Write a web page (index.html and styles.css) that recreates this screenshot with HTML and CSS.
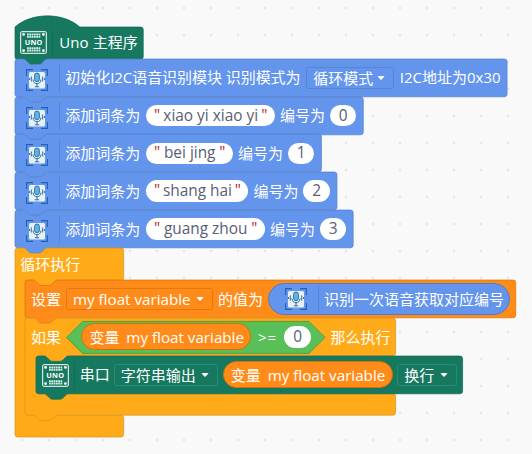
FILE: index.html
```
<!DOCTYPE html>
<html lang="zh-CN">
<head>
<meta charset="utf-8">
<title>Uno 主程序</title>
<link rel="stylesheet" href="styles.css">
</head>
<body>
<svg class="defs" width="0" height="0" aria-hidden="true">
  <symbol id="mic" viewBox="0 0 22 22">
    <rect x="3" y="3" width="16" height="16.5" rx="1.5" fill="#e9f0f5"/>
    <path d="M.6 7V.6H7M15 .6h6.4V7M21.4 15v6.4H15M7 21.4H.6V15" fill="none" stroke="#1c62b5" stroke-width="1.1"/>
    <rect x="8.6" y="4" width="4.8" height="8.8" rx="2.4" fill="#62b3e2" stroke="#1e6da8" stroke-width=".9"/>
    <path d="M7 10.5c0 5.6 8 5.6 8 0M11 14.8v3M8.8 17.8h4.4M5.3 7.5v5M3.6 9v2M16.7 7.5v5M18.4 9v2" fill="none" stroke="#276f9f" stroke-width="1"/>
  </symbol>
  <symbol id="board" viewBox="0 0 27 23">
    <rect x=".7" y=".7" width="25.6" height="21.6" rx="1" fill="none" stroke="#fff"/>
    <g fill="#fff"><circle cx="3.6" cy="3.4" r="1.4"/><circle cx="23.4" cy="3.4" r="1.4"/><circle cx="3.6" cy="19.6" r="1.4"/><circle cx="23.4" cy="19.6" r="1.4"/></g>
    <path d="M7 3.4h13.5M7 5.8h13.5M7 17.2h13.5M7 19.6h13.5" stroke="#d8eee6" stroke-width="1.9" stroke-dasharray="1.8 .5"/>
  </symbol>
</svg>

<main class="stack">
  <section class="block hat teal">
    <svg class="shape"><path d="M0 0c25-22 71-22 96 0H186a4 4 0 0 1 4 4V44a4 4 0 0 1-4 4H48c-2 0-3 1-4 2l-4 4c-1 1-2 2-4 2H24c-2 0-3-1-4-2l-4-4c-1-1-2-2-4-2H4a4 4 0 0 1-4-4Z"/></svg>
    <span class="uno"><svg><use href="#board"/></svg>UNO</span><i class="rule"></i>
    <span class="label title">Uno 主程序</span>
  </section>

  <section class="block row blue">
    <svg class="shape"><path d="M0 4a4 4 0 0 1 4-4H12c2 0 3 1 4 2l4 4c1 1 2 2 4 2H36c2 0 3-1 4-2l4-4c1-1 2-2 4-2H725a4 4 0 0 1 4 4V52a4 4 0 0 1-4 4H48c-2 0-3 1-4 2l-4 4c-1 1-2 2-4 2H24c-2 0-3-1-4-2l-4-4c-1-1-2-2-4-2H4a4 4 0 0 1-4-4Z"/></svg>
    <svg class="mic"><use href="#mic"/></svg><i class="rule"></i>
    <span class="label init">初始化I2C语音识别模块 识别模式为</span>
    <span class="drop mode">循环模式<b></b></span>
    <span class="label addr">I2C地址为0x30</span>
  </section>

  <section class="block row blue">
    <svg class="shape"><path d="M0 4a4 4 0 0 1 4-4H12c2 0 3 1 4 2l4 4c1 1 2 2 4 2H36c2 0 3-1 4-2l4-4c1-1 2-2 4-2H512a4 4 0 0 1 4 4V52a4 4 0 0 1-4 4H48c-2 0-3 1-4 2l-4 4c-1 1-2 2-4 2H24c-2 0-3-1-4-2l-4-4c-1-1-2-2-4-2H4a4 4 0 0 1-4-4Z"/></svg>
    <svg class="mic"><use href="#mic"/></svg><i class="rule"></i>
    <span class="label add">添加词条为</span>
    <span class="pill word w1"><q>"</q><span>xiao yi xiao yi</span><q>"</q></span>
    <span class="label num">编号为</span><span class="pill digit">0</span>
  </section>

  <section class="block row blue">
    <svg class="shape"><path d="M0 4a4 4 0 0 1 4-4H12c2 0 3 1 4 2l4 4c1 1 2 2 4 2H36c2 0 3-1 4-2l4-4c1-1 2-2 4-2H450a4 4 0 0 1 4 4V52a4 4 0 0 1-4 4H48c-2 0-3 1-4 2l-4 4c-1 1-2 2-4 2H24c-2 0-3-1-4-2l-4-4c-1-1-2-2-4-2H4a4 4 0 0 1-4-4Z"/></svg>
    <svg class="mic"><use href="#mic"/></svg><i class="rule"></i>
    <span class="label add">添加词条为</span>
    <span class="pill word w2"><q>"</q><span>bei jing</span><q>"</q></span>
    <span class="label num">编号为</span><span class="pill digit">1</span>
  </section>

  <section class="block row blue">
    <svg class="shape"><path d="M0 4a4 4 0 0 1 4-4H12c2 0 3 1 4 2l4 4c1 1 2 2 4 2H36c2 0 3-1 4-2l4-4c1-1 2-2 4-2H473a4 4 0 0 1 4 4V52a4 4 0 0 1-4 4H48c-2 0-3 1-4 2l-4 4c-1 1-2 2-4 2H24c-2 0-3-1-4-2l-4-4c-1-1-2-2-4-2H4a4 4 0 0 1-4-4Z"/></svg>
    <svg class="mic"><use href="#mic"/></svg><i class="rule"></i>
    <span class="label add">添加词条为</span>
    <span class="pill word w3"><q>"</q><span>shang hai</span><q>"</q></span>
    <span class="label num">编号为</span><span class="pill digit">2</span>
  </section>

  <section class="block row blue">
    <svg class="shape"><path d="M0 4a4 4 0 0 1 4-4H12c2 0 3 1 4 2l4 4c1 1 2 2 4 2H36c2 0 3-1 4-2l4-4c1-1 2-2 4-2H497a4 4 0 0 1 4 4V52a4 4 0 0 1-4 4H48c-2 0-3 1-4 2l-4 4c-1 1-2 2-4 2H24c-2 0-3-1-4-2l-4-4c-1-1-2-2-4-2H4a4 4 0 0 1-4-4Z"/></svg>
    <svg class="mic"><use href="#mic"/></svg><i class="rule"></i>
    <span class="label add">添加词条为</span>
    <span class="pill word w4"><q>"</q><span>guang zhou</span><q>"</q></span>
    <span class="label num">编号为</span><span class="pill digit">3</span>
  </section>

  <section class="block loop yellow">
    <svg class="shape"><path d="M0 4a4 4 0 0 1 4-4H12c2 0 3 1 4 2l4 4c1 1 2 2 4 2H36c2 0 3-1 4-2l4-4c1-1 2-2 4-2H157a4 4 0 0 1 4 4V44a4 4 0 0 1-4 4H64c-2 0-3 1-4 2l-4 4c-1 1-2 2-4 2H40c-2 0-3-1-4-2l-4-4c-1-1-2-2-4-2H20a4 4 0 0 0-4 4V244a4 4 0 0 0 4 4H157a4 4 0 0 1 4 4V276a4 4 0 0 1-4 4H4a4 4 0 0 1-4-4Z"/></svg>
    <header class="loop-head"><span class="label">循环执行</span></header>
    <div class="mouth">
      <section class="block row orange">
        <svg class="shape"><path d="M0 4a4 4 0 0 1 4-4H12c2 0 3 1 4 2l4 4c1 1 2 2 4 2H36c2 0 3-1 4-2l4-4c1-1 2-2 4-2H723a4 4 0 0 1 4 4V52a4 4 0 0 1-4 4H48c-2 0-3 1-4 2l-4 4c-1 1-2 2-4 2H24c-2 0-3-1-4-2l-4-4c-1-1-2-2-4-2H4a4 4 0 0 1-4-4Z"/></svg>
        <span class="label first">设置</span>
        <span class="drop var"><span class="latin">my float variable</span><b></b></span>
        <span class="label value">的值为</span>
        <span class="reporter listen"><svg class="mic"><use href="#mic"/></svg><i class="rule"></i><span class="label">识别一次语音获取对应编号</span></span>
      </section>
      <section class="block branch yellow">
        <svg class="shape"><path d="M0 4a4 4 0 0 1 4-4H12c2 0 3 1 4 2l4 4c1 1 2 2 4 2H36c2 0 3-1 4-2l4-4c1-1 2-2 4-2H545a4 4 0 0 1 4 4V52a4 4 0 0 1-4 4H64c-2 0-3 1-4 2l-4 4c-1 1-2 2-4 2H40c-2 0-3-1-4-2l-4-4c-1-1-2-2-4-2H20a4 4 0 0 0-4 4V108a4 4 0 0 0 4 4H545a4 4 0 0 1 4 4V140a4 4 0 0 1-4 4H48c-2 0-3 1-4 2l-4 4c-1 1-2 2-4 2H24c-2 0-3-1-4-2l-4-4c-1-1-2-2-4-2H4a4 4 0 0 1-4-4Z"/></svg>
        <header class="row">
          <span class="label first">如果</span>
          <span class="test">
            <svg class="hex"><path d="M16.5.4H243L259 16.4 243 32.4H16.5L.5 16.4Z"/></svg>
            <span class="reporter variable"><span class="cjk">变量</span><span class="latin">my float variable</span></span>
            <span class="op">&gt;=</span><span class="pill digit">0</span>
          </span>
          <span class="label then">那么执行</span>
        </header>
        <div class="mouth">
          <section class="block row teal">
            <svg class="shape"><path d="M0 4a4 4 0 0 1 4-4H12c2 0 3 1 4 2l4 4c1 1 2 2 4 2H36c2 0 3-1 4-2l4-4c1-1 2-2 4-2H628a4 4 0 0 1 4 4V52a4 4 0 0 1-4 4H48c-2 0-3 1-4 2l-4 4c-1 1-2 2-4 2H24c-2 0-3-1-4-2l-4-4c-1-1-2-2-4-2H4a4 4 0 0 1-4-4Z"/></svg>
            <span class="uno"><svg><use href="#board"/></svg>UNO</span><i class="rule"></i>
            <span class="label serial">串口</span>
            <span class="drop output">字符串输出<b></b></span>
            <span class="reporter variable"><span class="cjk">变量</span><span class="latin">my float variable</span></span>
            <span class="drop newline">换行<b></b></span>
          </section>
        </div>
      </section>
    </div>
  </section>
</main>
</body>
</html>
```

FILE: styles.css
```
* { box-sizing: border-box; }
body {
  margin: 0;
  height: 454px;
  overflow: hidden;
  background: #f9f9f9 radial-gradient(circle at 13.5px 13.5px, #dadada .8px, transparent 1.3px) 8.5px -5.5px / 27px 27px;
  font: 15px/20px "Open Sans", "Noto Sans CJK SC", sans-serif;
  color: #fff;
}
.defs { position: absolute; }
.stack { padding: 26.5px 0 0 14.7px; }

/* blocks */
.block { position: relative; }
.row, .hat { display: flex; align-items: center; height: 37.8px; white-space: nowrap; }
.hat { height: 32.4px; }
.row > *, .hat > *, .reporter > *, .test > * { flex: none; }
.shape {
  position: absolute;
  left: 0;
  top: 0;
  width: 1px;
  height: 1px;
  overflow: visible;
}
.shape path { transform: scale(.675); stroke-width: 1; }
.blue > .shape { fill: #6495ec; stroke: #4f7cca; }
.teal > .shape { fill: #16795f; stroke: #0c6650; }
.yellow > .shape { fill: #ffab19; stroke: #d29019; }
.orange > .shape { fill: #ff8c1a; stroke: #db6e00; }
.row > *:not(.shape), .hat > *:not(.shape), .loop-head { position: relative; }

.mic { width: 22px; height: 22px; margin-left: 11.3px; top: 2px; }
.uno {
  width: 27px;
  height: 23px;
  margin-left: 5.5px;
  top: .3px;
  font-size: 7.3px;
  font-weight: 700;
  line-height: 23px;
  letter-spacing: .2px;
  text-align: center;
}
.uno svg { position: absolute; left: 0; top: 0; width: 27px; height: 23px; }
.rule { width: 1px; height: 28px; margin-left: 11px; background: #5584d4; }
.teal .rule { margin-left: 5px; background: #126e57; }
.label { position: relative; top: -.3px; }
.title { width: 80px; margin-left: 6px; letter-spacing: .1px; }
.init { width: 236px; margin-left: 5.3px; letter-spacing: -.05px; }
.addr { margin-left: 5.5px; }
.add { width: 75px; margin-left: 5.3px; }
.num { width: 45px; margin-left: 5px; }
.first { width: 30px; margin-left: 5.5px; }
.value { width: 45px; margin-left: 5px; }
.then { margin-left: 5px; }
.serial { width: 30px; margin-left: 5px; }
.latin { font-size: 15.2px; }

/* inputs */
.drop {
  display: flex;
  align-items: center;
  justify-content: space-between;
  height: 22px;
  padding: 0 8px 0 6px;
  border: 1px solid #5584d4;
  border-radius: 2.5px;
}
.drop b { border: solid transparent; border-width: 4px 4px 0; border-top-color: #fff; border-radius: 2px; }
.orange .drop { border-color: #e87908; }
.teal .drop { border-color: #258d72; }
.mode { width: 88px; margin-left: 5px; }
.var { width: 147px; margin-left: 5px; }
.output { width: 104px; margin-left: 4px; }
.newline { width: 59.5px; margin-left: 4.5px; }
.pill {
  display: flex;
  align-items: center;
  justify-content: center;
  height: 21.6px;
  border-radius: 11px;
  background: #fff;
  color: #575e75;
}
.digit { width: 26.5px; margin-left: 5px; font-size: 15.4px; }
.word { margin-left: 5.7px; justify-content: space-between; padding: 0 7.5px 0 8px; font-size: 15.4px; }
.word q { quotes: none; color: #b3292c; }
.word q::before, .word q::after { content: none; }
.w1 { width: 129px; }
.w2 { width: 87px; }
.w3 { width: 102.5px; }
.w4 { width: 119px; }

/* nested reporters */
.reporter { display: flex; align-items: center; border: .7px solid #db6e00; background: #ff8c1a; border-radius: 17px; }
.listen { width: 242px; height: 32.4px; margin-left: 5.5px; border-color: #4f7cca; background: #6495ec; }
.listen .mic { position: relative; top: 0; margin-left: 15.5px; }
.listen .label { margin-left: 5px; }
.variable { width: 170px; height: 27px; padding: 0 6.5px 0 7px; justify-content: space-between; }
.teal .variable { margin-left: 5px; }
.test { display: flex; align-items: center; width: 259px; height: 32.4px; margin-left: 5.5px; padding-left: 15px; }
.hex { position: absolute; left: 0; top: 0; width: 259px; height: 33px; overflow: visible; fill: #59c059; stroke: #389438; stroke-width: .7; }
.test > *:not(.hex) { position: relative; }
.op { width: 22px; margin-left: 6.5px; letter-spacing: 1px; }
.op + .digit { margin-left: 4.5px; }

/* C-shaped blocks */
.loop { height: 189px; }
.loop-head { height: 32.4px; padding: 6px 0 0 5.5px; }
.mouth { padding-left: 10.8px; }
.branch { height: 97.2px; }
```
